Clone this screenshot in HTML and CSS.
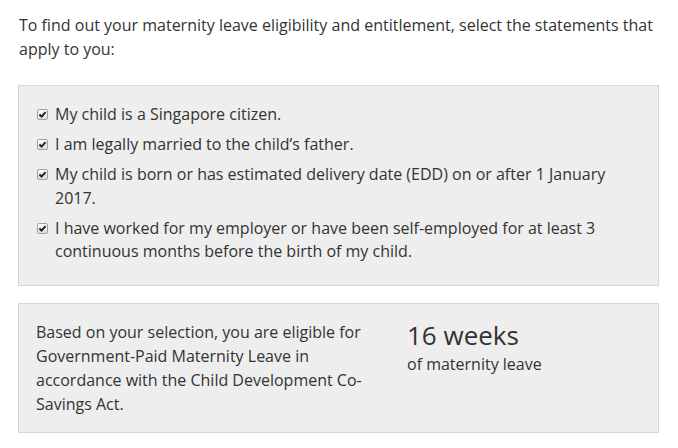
FILE: index.html
```html
<!DOCTYPE html>
<html lang="en">
<head>
<meta charset="utf-8">
<title>Maternity leave eligibility</title>
<link rel="stylesheet" href="styles.css">
</head>
<body>
<div class="page">
  <p class="intro">To find out your maternity leave eligibility and entitlement, select the statements that apply to you:</p>
  <div class="panel panel-list">
    <ul class="checklist">
      <li><span class="cb"><svg viewBox="0 0 10 10" width="9" height="9"><path d="M1.6 5 L4 7.4 L8.4 2.4" fill="none" stroke="#1e1e1e" stroke-width="2.1"/></svg></span><span class="label">My child is a Singapore citizen.</span></li>
      <li><span class="cb"><svg viewBox="0 0 10 10" width="9" height="9"><path d="M1.6 5 L4 7.4 L8.4 2.4" fill="none" stroke="#1e1e1e" stroke-width="2.1"/></svg></span><span class="label">I am legally married to the child’s father.</span></li>
      <li><span class="cb"><svg viewBox="0 0 10 10" width="9" height="9"><path d="M1.6 5 L4 7.4 L8.4 2.4" fill="none" stroke="#1e1e1e" stroke-width="2.1"/></svg></span><span class="label">My child is born or has estimated delivery date (EDD) on or after 1 January 2017.</span></li>
      <li><span class="cb"><svg viewBox="0 0 10 10" width="9" height="9"><path d="M1.6 5 L4 7.4 L8.4 2.4" fill="none" stroke="#1e1e1e" stroke-width="2.1"/></svg></span><span class="label">I have worked for my employer or have been self-employed for at least 3 continuous months before the birth of my child.</span></li>
    </ul>
  </div>
  <div class="panel panel-result">
    <p class="result-text">Based on your selection, you are eligible for Government-Paid Maternity Leave in accordance with the Child Development Co-Savings Act.</p>
    <div class="result-value">
      <div class="weeks">16 weeks</div>
      <div class="weeks-sub">of maternity leave</div>
    </div>
  </div>
</div>
</body>
</html>
```
FILE: styles.css
```css
html, body {
  margin: 0;
  padding: 0;
  background: #fff;
}
body {
  font-family: "Open Sans", "Liberation Sans", sans-serif;
  color: #333;
}
.page {
  padding: 13px 19px 0 18px;
  width: 641px;
}
.intro {
  margin: 0 0 24px 1px;
  font-size: 16px;
  line-height: 24px;
}
.panel {
  background: #eeeeee;
  border: 1px solid #d6d6d6;
}
.panel-list {
  padding: 17px 16px 21px 18px;
}
.checklist {
  list-style: none;
  margin: 0;
  padding: 0;
  display: flex;
  flex-direction: column;
  gap: 6.5px;
}
.checklist li {
  display: flex;
  align-items: flex-start;
  font-size: 16px;
  line-height: 23.5px;
}
.cb {
  flex: none;
  box-sizing: border-box;
  width: 11px;
  height: 11px;
  margin: 6px 7px 0 0;
  border: 1px solid #a0a0a0;
  border-radius: 2px;
  background: linear-gradient(#fbfbfb, #dedede);
  display: flex;
  align-items: center;
  justify-content: center;
}
.panel-result {
  margin-top: 17px;
  padding: 16px 16px 15px 17px;
  display: flex;
  gap: 31px;
}
.result-text {
  margin: 0;
  width: 340px;
  font-size: 16px;
  line-height: 24.3px;
}
.weeks {
  font-size: 26px;
  line-height: 30px;
}
.weeks-sub {
  font-size: 16px;
  line-height: 24px;
  margin-top: 2px;
}
```
